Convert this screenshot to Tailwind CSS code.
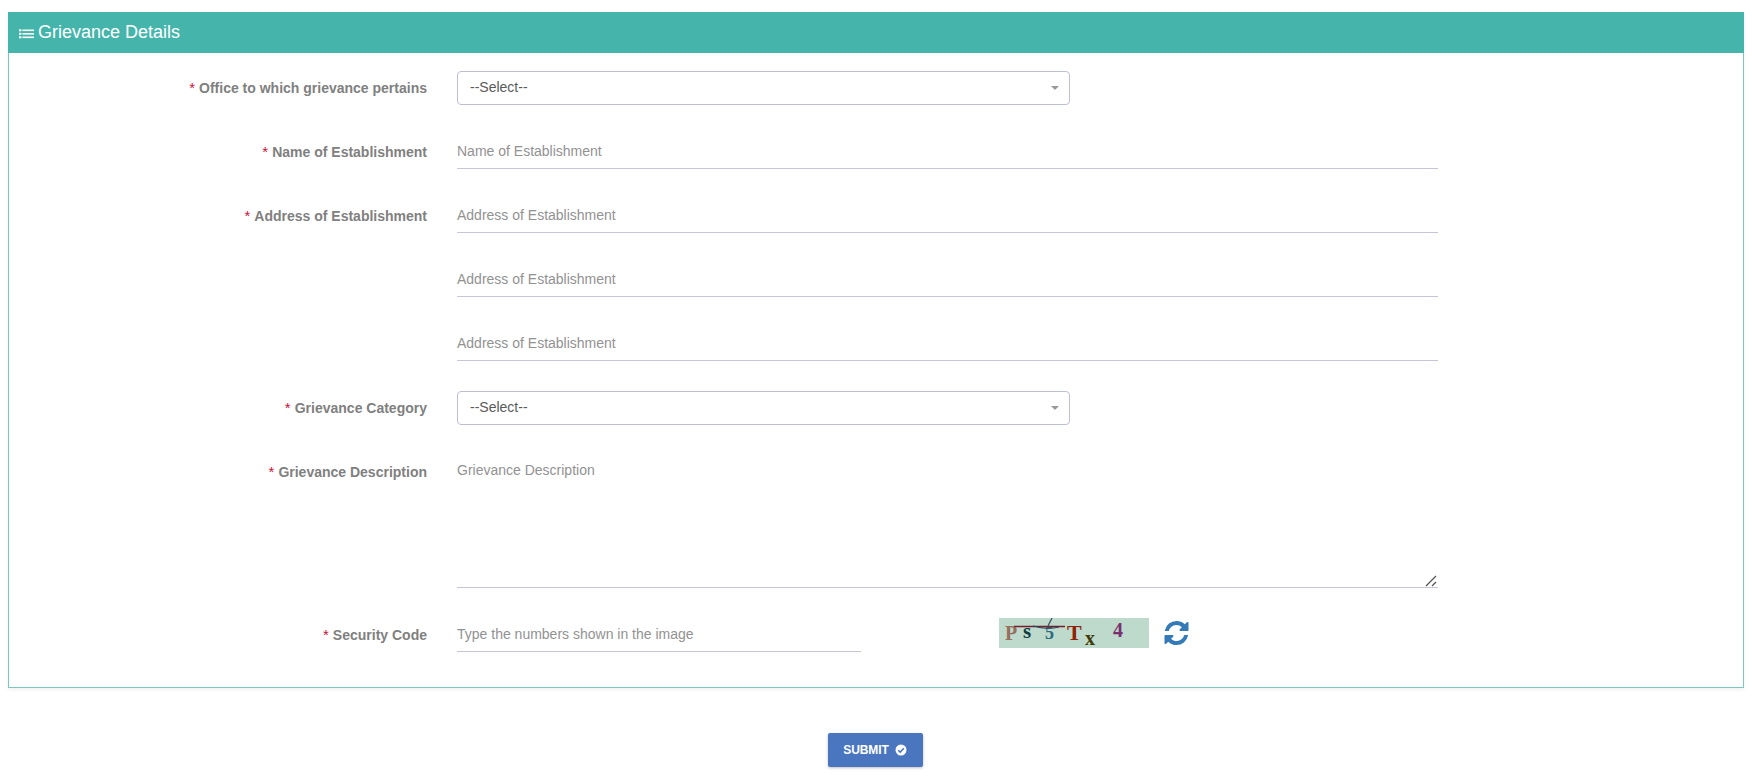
<!DOCTYPE html>
<html lang="en">
<head>
  <meta charset="UTF-8" />
  <title>Grievance Details</title>
  <script src="https://cdn.jsdelivr.net/npm/@tailwindcss/browser@4"></script>
</head>
<body class="bg-white h-[784px] overflow-hidden font-['Liberation_Sans',Arial,sans-serif]">
  <div class="pt-3 pl-2 pr-3">
    <div class="border border-[#7cc8c1] shadow-[0_2px_4px_rgba(0,0,0,0.06)]">
      <div class="h-[41px] -mx-px -mt-px bg-[#45b5ac] flex items-center pl-[11px] text-white text-[18px]">
        <svg class="w-[15px] h-[10px] mr-[4px] mt-[3px]" viewBox="0 0 15 10" fill="#fff">
          <rect x="0" y="0.3" width="2.4" height="2"/><rect x="3.4" y="0.5" width="11.6" height="1.6"/>
          <rect x="0" y="3.8" width="2.4" height="2"/><rect x="3.4" y="4" width="11.6" height="1.6"/>
          <rect x="0" y="7.3" width="2.4" height="2"/><rect x="3.4" y="7.5" width="11.6" height="1.6"/>
        </svg>
        Grievance Details
      </div>

      <div class="pt-[18px] pb-[35px] flex flex-col gap-[30px] text-[14px]">
        <div class="flex">
          <label class="w-[418px] h-[34px] flex items-center justify-end font-bold text-[#808080]"><span class="text-[#c9123c] font-normal text-[15px] mr-1">*</span>Office to which grievance pertains</label>
          <div class="ml-[30px] w-[613px] h-[34px] border border-[#bcbfd2] rounded-[4px] flex items-center justify-between pl-[12px] pr-[10px] pb-[2px] text-[#5a5a5a]">
            --Select--
            <span class="w-0 h-0 mt-[2px] border-x-[4px] border-x-transparent border-t-[4px] border-t-[#999]"></span>
          </div>
        </div>

        <div class="flex">
          <label class="w-[418px] h-[34px] flex items-center justify-end font-bold text-[#808080]"><span class="text-[#c9123c] font-normal text-[15px] mr-1">*</span>Name of Establishment</label>
          <div class="ml-[30px] w-[981px] h-[34px] border-b border-[#c5c7d6] flex items-center text-[#929292]">Name of Establishment</div>
        </div>

        <div class="flex">
          <label class="w-[418px] h-[34px] flex items-center justify-end font-bold text-[#808080]"><span class="text-[#c9123c] font-normal text-[15px] mr-1">*</span>Address of Establishment</label>
          <div class="ml-[30px] w-[981px] h-[34px] border-b border-[#c5c7d6] flex items-center text-[#929292]">Address of Establishment</div>
        </div>

        <div class="flex">
          <div class="w-[418px]"></div>
          <div class="ml-[30px] w-[981px] h-[34px] border-b border-[#c5c7d6] flex items-center text-[#929292]">Address of Establishment</div>
        </div>

        <div class="flex">
          <div class="w-[418px]"></div>
          <div class="ml-[30px] w-[981px] h-[34px] border-b border-[#c5c7d6] flex items-center text-[#929292]">Address of Establishment</div>
        </div>

        <div class="flex">
          <label class="w-[418px] h-[34px] flex items-center justify-end font-bold text-[#808080]"><span class="text-[#c9123c] font-normal text-[15px] mr-1">*</span>Grievance Category</label>
          <div class="ml-[30px] w-[613px] h-[34px] border border-[#bcbfd2] rounded-[4px] flex items-center justify-between pl-[12px] pr-[10px] pb-[2px] text-[#5a5a5a]">
            --Select--
            <span class="w-0 h-0 mt-[2px] border-x-[4px] border-x-transparent border-t-[4px] border-t-[#999]"></span>
          </div>
        </div>

        <div class="flex">
          <label class="w-[418px] h-[34px] flex items-center justify-end font-bold text-[#808080]"><span class="text-[#c9123c] font-normal text-[15px] mr-1">*</span>Grievance Description</label>
          <div class="relative ml-[30px] w-[981px] h-[133px] border-b border-[#c5c7d6] pt-[5px] text-[#929292]">
            Grievance Description
            <svg class="absolute right-0 bottom-0 w-[13px] h-[12px]" viewBox="0 0 13 12" fill="none" stroke="#555" stroke-width="1.2">
              <path d="M1 11 L11 1"/><path d="M7 11 L11 7"/>
            </svg>
          </div>
        </div>

        <div class="flex">
          <label class="w-[418px] h-[34px] flex items-center justify-end font-bold text-[#808080]"><span class="text-[#c9123c] font-normal text-[15px] mr-1">*</span>Security Code</label>
          <div class="ml-[30px] w-[404px] h-[34px] border-b border-[#c5c7d6] flex items-center text-[#929292]">Type the numbers shown in the image</div>
          <div class="relative ml-[138px] w-[150px] h-[30px] bg-[#bddacd] overflow-hidden font-['Liberation_Serif',serif] font-bold leading-none">
            <span class="absolute left-[6px] top-[5px] text-[20px] text-[#96705c]">P</span>
            <span class="absolute left-[24px] top-[3px] text-[21px] text-[#0f3d40]">s</span>
            <span class="absolute left-[46px] top-[6px] text-[18px] text-[#2c6a80]">5</span>
            <span class="absolute left-[68px] top-[4px] text-[22px] text-[#8f2208]">T</span>
            <span class="absolute left-[86px] top-[10px] text-[20px] text-[#3f3a08]">x</span>
            <span class="absolute left-[114px] top-[2px] text-[20px] text-[#7a2f70]">4</span>
            <svg class="absolute inset-0" width="150" height="30" viewBox="0 0 150 30" fill="none">
              <path d="M15 8.500 H66" stroke="#7c1d2c" stroke-width="1.500"/>
              <path d="M34 8 Q48 12 60 9" stroke="#1f4a5c" stroke-width="1.200"/>
              <path d="M49 8 L53 0" stroke="#3a5566" stroke-width="1.300"/>
            </svg>
          </div>
          <svg class="ml-[15px] mt-[3px] w-[25px] h-[24px]" viewBox="0 0 1536 1536" fill="#337ab7">
            <path d="M1511 928q0 5-1 7-64 268-268 434.500t-478 166.500q-146 0-282.500-55t-243.500-157l-129 129q-19 19-45 19t-45-19-19-45v-448q0-26 19-45t45-19h448q26 0 45 19t19 45-19 45l-137 137q71 66 161 102t187 36q134 0 250-65t186-179q11-17 53-117 8-23 30-23h192q13 0 22.500 9.500t9.500 22.500zM1536 128v448q0 26-19 45t-45 19h-448q-26 0-45-19t-19-45 19-45l138-138q-148-137-349-137-134 0-250 65t-186 179q-11 17-53 117-8 23-30 23h-199q-13 0-22.500-9.500t-9.500-22.500v-7q65-268 270-434.500t480-166.500q146 0 284 55.500t245 156.500l130-129q19-19 45-19t45 19 19 45z"/>
          </svg>
        </div>
      </div>
    </div>

    <div class="mt-[45px] flex justify-center">
      <button class="w-[95px] h-[34px] ml-[-2px] bg-[#4a76c0] rounded-[2px] shadow-[0_1px_3px_rgba(0,0,0,0.25)] text-white text-[12px] tracking-[-0.1px] font-bold flex items-center justify-center gap-[6px]">
        SUBMIT
        <svg class="w-[12px] h-[12px]" viewBox="0 0 12 12">
          <circle cx="6" cy="6" r="5.500" fill="#fff"/>
          <path d="M3.200 6.200 L5.200 8.100 L8.900 4.300" fill="none" stroke="#4a76c0" stroke-width="1.500"/>
        </svg>
      </button>
    </div>
  </div>
</body>
</html>
